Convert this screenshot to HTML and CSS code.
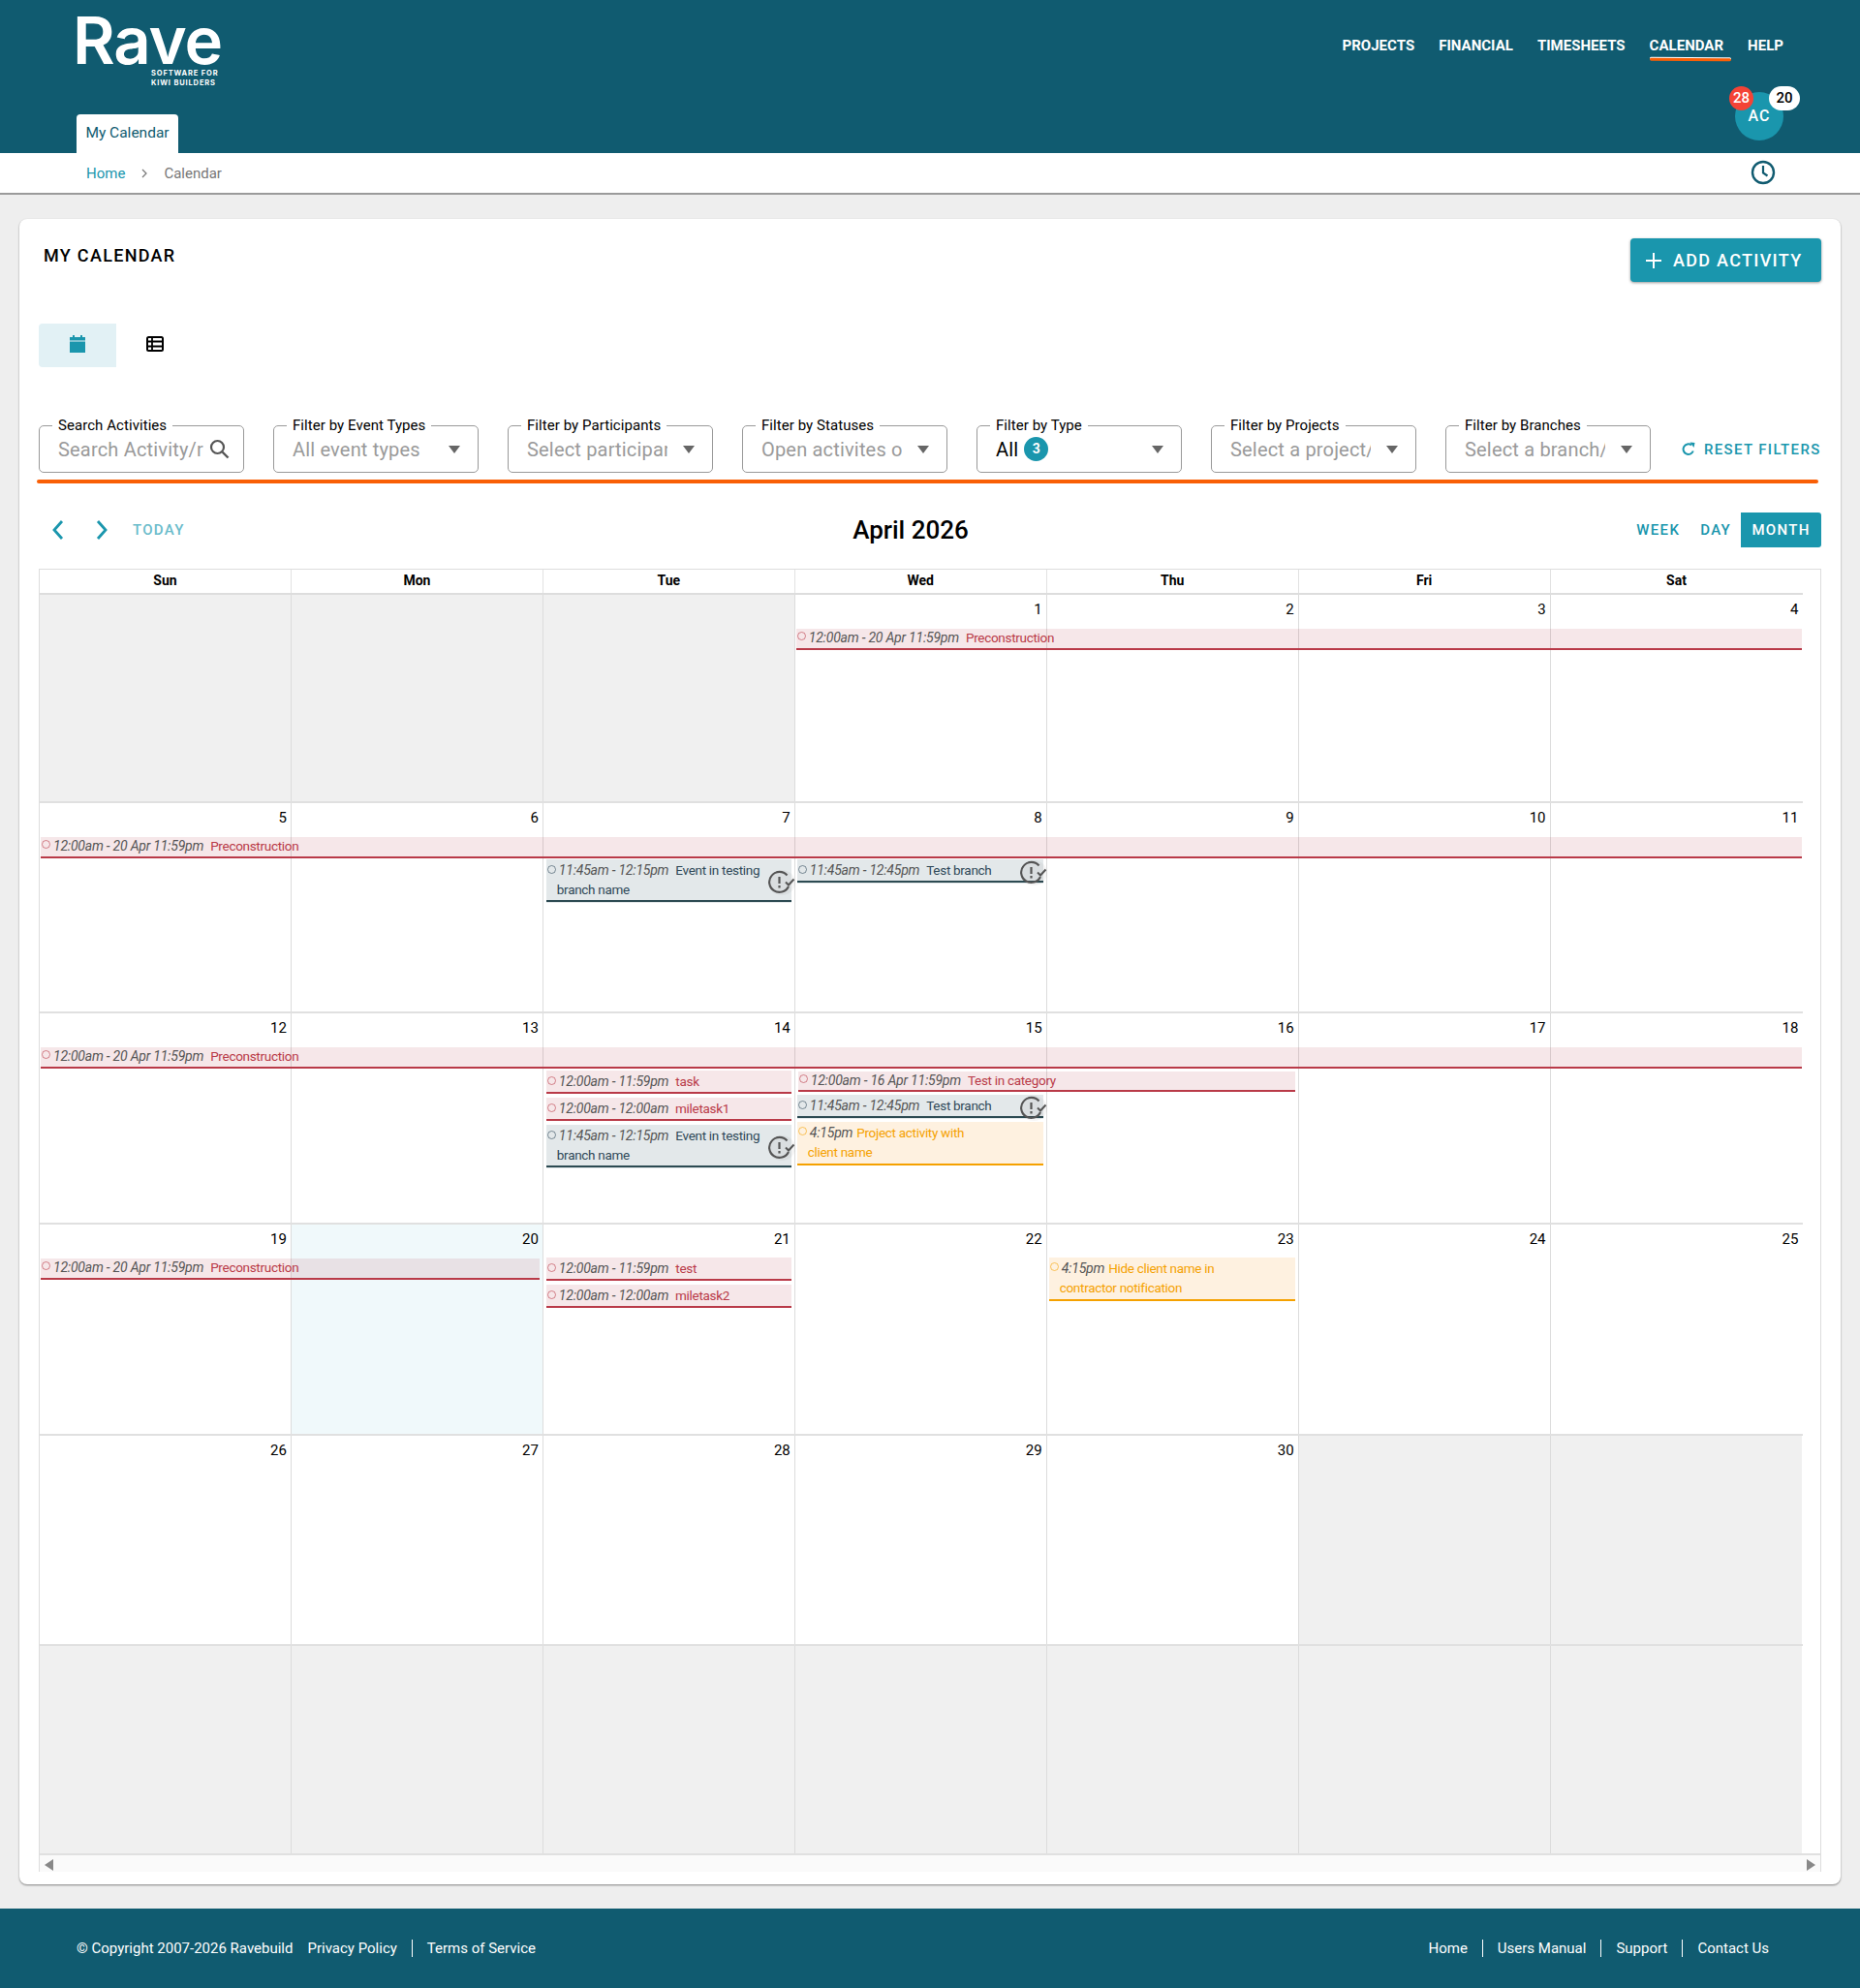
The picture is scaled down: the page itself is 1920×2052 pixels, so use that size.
FILE: index.html
```html
<!DOCTYPE html>
<html lang="en">
<head>
<meta charset="utf-8">
<title>My Calendar</title>
<link rel="stylesheet" href="styles.css">
</head>
<body>
<header class="top">
  <div class="brand">
    <div class="logo">Rave</div>
    <div class="tag">SOFTWARE FOR<br>KIWI BUILDERS</div>
  </div>
  <div class="tab">My Calendar</div>
  <nav class="nav">
    <a>PROJECTS</a><a>FINANCIAL</a><a>TIMESHEETS</a><a class="on">CALENDAR</a><a>HELP</a>
  </nav>
  <div class="avatar">AC<span class="badge b-red">28</span><span class="badge b-white">20</span></div>
</header>
<div class="crumbs">
  <a class="home">Home</a>
  <svg class="sep" width="8" height="10" viewBox="0 0 8 10"><path d="M2 1l4 4-4 4" fill="none" stroke="#777" stroke-width="1.2"/></svg>
  <span class="cur">Calendar</span>
  <svg class="clock" width="26" height="26" viewBox="0 0 26 26"><circle cx="13" cy="13" r="11" fill="none" stroke="#105b70" stroke-width="2.4"/><path d="M13 6v7.5l4.500 3" fill="none" stroke="#105b70" stroke-width="2.200"/></svg>
</div>
<main class="card">
  <div class="titlebar">
    <h1>MY CALENDAR</h1>
    <button class="add"><svg width="16" height="16" viewBox="0 0 16 16"><path d="M8 0v16M0 8h16" stroke="#fff" stroke-width="2"/></svg>ADD ACTIVITY</button>
  </div>
  <div class="toggle">
    <span class="tg active"><svg width="16" height="18" viewBox="0 0 16 18"><path d="M3 0h2v3H3zM11 0h2v3h-2z" fill="#1a96ad"/><rect x="0" y="2" width="16" height="3.500" fill="#1a96ad"/><rect x="0" y="6.500" width="16" height="11.500" fill="#1a96ad"/></svg></span>
    <span class="tg"><svg width="18" height="16" viewBox="0 0 18 16"><rect x="1" y="1" width="16" height="14" rx="1.500" fill="none" stroke="#000" stroke-width="2"/><path d="M1 5.500h16M1 10.500h16M6 1v14" stroke="#000" stroke-width="1.800"/></svg></span>
  </div>
  <div class="filters">
    <div class="field search"><span class="lbl">Search Activities</span><span class="val">Search Activity/record</span><svg class="mag" width="21" height="21" viewBox="0 0 21 21"><circle cx="8.500" cy="8.500" r="6.500" fill="none" stroke="#555" stroke-width="2.200"/><path d="M13.500 13.500l6 6" stroke="#555" stroke-width="2.400"/></svg></div>
    <div class="field"><span class="lbl">Filter by Event Types</span><span class="val">All event types</span><i class="caret"></i></div>
    <div class="field"><span class="lbl">Filter by Participants</span><span class="val">Select participants</span><i class="caret"></i></div>
    <div class="field"><span class="lbl">Filter by Statuses</span><span class="val">Open activites only</span><i class="caret"></i></div>
    <div class="field"><span class="lbl">Filter by Type</span><span class="val dark">All<b class="count">3</b></span><i class="caret"></i></div>
    <div class="field"><span class="lbl">Filter by Projects</span><span class="val">Select a project/s</span><i class="caret"></i></div>
    <div class="field"><span class="lbl">Filter by Branches</span><span class="val">Select a branch/es</span><i class="caret"></i></div>
    <a class="reset"><svg width="14" height="15" viewBox="0 0 14 15"><path d="M11.800 9.500A5.300 5.300 0 1 1 10 3.400" fill="none" stroke="#1a96ad" stroke-width="2"/><path d="M8.500 0.500l5 .5-1 5z" fill="#1a96ad"/></svg>RESET FILTERS</a>
  </div>
  <div class="rule"></div>
  <div class="toolbar">
    <div class="tb-left">
      <svg width="14" height="22" viewBox="0 0 14 22"><path d="M11 2L3 11l8 9" fill="none" stroke="#1a96ad" stroke-width="2.800"/></svg>
      <svg width="14" height="22" viewBox="0 0 14 22"><path d="M3 2l8 9-8 9" fill="none" stroke="#1a96ad" stroke-width="2.800"/></svg>
      <span class="today">TODAY</span>
    </div>
    <h2>April 2026</h2>
    <div class="views"><a>WEEK</a><a>DAY</a><a class="sel">MONTH</a></div>
  </div>
  <section class="cal">
    <div class="head"><div>Sun</div><div>Mon</div><div>Tue</div><div>Wed</div><div>Thu</div><div>Fri</div><div>Sat</div></div>
    <div class="weeks">
      <div class="week">
        <div class="days"><div class="off"></div><div class="off"></div><div class="off"></div><div>1</div><div>2</div><div>3</div><div>4</div></div>
        <div class="evs">
          <div class="ev red c4-7 span"><i></i><em>12:00am - 20 Apr 11:59pm</em><span>Preconstruction</span></div>
        </div>
      </div>
      <div class="week">
        <div class="days"><div>5</div><div>6</div><div>7</div><div>8</div><div>9</div><div>10</div><div>11</div></div>
        <div class="evs">
          <div class="ev red all span"><i></i><em>12:00am - 20 Apr 11:59pm</em><span>Preconstruction</span></div>
          <div class="stack s3 tight">
            <div class="ev grey"><i></i><em>11:45am - 12:15pm</em><span>Event in testing<br>branch name</span><svg class="warn" width="28" height="26" viewBox="0 0 28 26"><use href="#warn"/></svg></div>
          </div>
          <div class="stack s4 tight">
            <div class="ev grey"><i></i><em>11:45am - 12:45pm</em><span>Test branch</span><svg class="warn" width="28" height="26" viewBox="0 0 28 26"><use href="#warn"/></svg></div>
          </div>
        </div>
      </div>
      <div class="week">
        <div class="days"><div>12</div><div>13</div><div>14</div><div>15</div><div>16</div><div>17</div><div>18</div></div>
        <div class="evs">
          <div class="ev red all span"><i></i><em>12:00am - 20 Apr 11:59pm</em><span>Preconstruction</span></div>
          <div class="stack s3 wide">
            <div class="ev red"><i></i><em>12:00am - 11:59pm</em><span>task</span></div>
            <div class="ev red"><i></i><em>12:00am - 12:00am</em><span>miletask1</span></div>
            <div class="ev grey"><i></i><em>11:45am - 12:15pm</em><span>Event in testing<br>branch name</span><svg class="warn" width="28" height="26" viewBox="0 0 28 26"><use href="#warn"/></svg></div>
          </div>
          <div class="stack s4 wide">
            <div class="ev red cat"><i></i><em>12:00am - 16 Apr 11:59pm</em><span>Test in category</span></div>
            <div class="ev grey half"><i></i><em>11:45am - 12:45pm</em><span>Test branch</span><svg class="warn" width="28" height="26" viewBox="0 0 28 26"><use href="#warn"/></svg></div>
            <div class="ev amber half"><i></i><em>4:15pm</em><span>Project activity with<br>client name</span></div>
          </div>
        </div>
      </div>
      <div class="week">
        <div class="days"><div>19</div><div class="now">20</div><div>21</div><div>22</div><div>23</div><div>24</div><div>25</div></div>
        <div class="evs">
          <div class="ev red two span"><i></i><em>12:00am - 20 Apr 11:59pm</em><span>Preconstruction</span></div>
          <div class="stack s3 same">
            <div class="ev red"><i></i><em>12:00am - 11:59pm</em><span>test</span></div>
            <div class="ev red"><i></i><em>12:00am - 12:00am</em><span>miletask2</span></div>
          </div>
          <div class="stack s5 same">
            <div class="ev amber"><i></i><em>4:15pm</em><span>Hide client name in<br>contractor notification</span></div>
          </div>
        </div>
      </div>
      <div class="week">
        <div class="days"><div>26</div><div>27</div><div>28</div><div>29</div><div>30</div><div class="off"></div><div class="off"></div></div>
      </div>
      <div class="week">
        <div class="days"><div class="off"></div><div class="off"></div><div class="off"></div><div class="off"></div><div class="off"></div><div class="off"></div><div class="off"></div></div>
      </div>
    </div>
    <div class="hscroll"><i class="al"></i><i class="ar"></i></div>
  </section>
</main>
<footer class="foot">
  <div class="f-left"><span class="copy">© Copyright 2007-2026 Ravebuild</span><a>Privacy Policy</a><a>Terms of Service</a></div>
  <div class="f-right"><a>Home</a><a>Users Manual</a><a>Support</a><a>Contact Us</a></div>
</footer>
<svg width="0" height="0" class="defs"><defs><g id="warn"><path d="M19.500 5.500A10.500 10.500 0 1 0 21 17" fill="none" stroke="#555" stroke-width="2.200"/><path d="M11.500 7v7M11.500 16v2.500" stroke="#555" stroke-width="2.200"/><path d="M18 12.500l3 3 5.500-6" fill="none" stroke="#555" stroke-width="2"/></g></defs></svg>
</body>
</html>
```
FILE: styles.css
```css
* { box-sizing: border-box; }
html, body { margin: 0; padding: 0; }
body { background: #eeeeee; font-family: Roboto, "Liberation Sans", sans-serif; color: #000; height: 2052px; overflow: hidden; }
a { text-decoration: none; }

.top { position: relative; height: 158px; background: #105b70; padding: 0 79px; display: flex; flex-direction: column; justify-content: flex-end; }
.brand { position: absolute; left: 79px; top: 14px; width: 149px; color: #fff; }
.logo { font-family: Inter, Roboto, sans-serif; font-size: 67px; font-weight: 600; letter-spacing: -1.1px; line-height: 56px; margin-left: -4px; }
.tag { font-family: Inter, Roboto, sans-serif; font-size: 7.500px; font-weight: 700; letter-spacing: .85px; line-height: 10px; text-align: left; margin: 1px 0 0 77px; white-space: nowrap; }
.tab { width: 105px; height: 40px; background: #fff; border-radius: 4px 4px 0 0; color: #105b70; font-size: 15.500px; line-height: 39px; text-align: center; }
.nav { position: absolute; top: 38px; right: 79px; display: flex; gap: 25px; }
.nav a { color: #fff; font-weight: 700; font-size: 15px; line-height: 18px; letter-spacing: .02px; position: relative; }
.nav a.on::after { content: ""; position: absolute; left: 0; top: 22px; width: 84px; height: 3px; border-radius: 2px; background: #f95f06; box-shadow: 0 -1px 0 #fff; transform: rotate(.4deg); }
.avatar { position: absolute; left: 1791px; top: 95px; width: 50px; height: 50px; border-radius: 50%; background: #1a96ad; color: #fff; font-weight: 500; font-size: 16px; letter-spacing: 1px; line-height: 50px; text-align: center; padding-top: 0; }
.badge { position: absolute; top: -6px; height: 25px; border-radius: 13px; font-size: 15px; font-weight: 500; line-height: 25px; text-align: center; letter-spacing: 0; }
.b-red { left: -6px; width: 25px; background: #f44336; color: #fff; }
.b-white { left: 35px; width: 32px; background: #fff; color: #000; }

.crumbs { height: 43px; background: #fff; border-bottom: 2px solid #9a9a9a; display: flex; align-items: center; padding-left: 89px; font-size: 15px; position: relative; }
.home { color: #1a96ad; }
.sep { margin: 0 16px; }
.cur { color: #777; }
.clock { position: absolute; left: 1807px; top: 7px; }

.card { margin: 25px 20px 0; height: 1719px; background: #fff; border-radius: 8px; box-shadow: 0 1px 2px rgba(0,0,0,.45); padding: 20px 20px 0; }
.titlebar { display: flex; justify-content: space-between; align-items: flex-start; height: 45px; }
h1 { margin: 7px 0 0 5px; font-size: 18px; line-height: 21px; font-weight: 500; letter-spacing: 1.3px; }
.add { width: 197px; height: 45px; border: 0; border-radius: 4px; background: #1a96ad; color: #fff; font: 500 18px Roboto, sans-serif; letter-spacing: 1.3px; display: flex; align-items: center; gap: 12px; padding: 0 0 0 16px; box-shadow: 0 1px 3px rgba(0,0,0,.4); }
.toggle { display: flex; margin-top: 43px; }
.tg { width: 80px; height: 45px; display: flex; align-items: center; justify-content: center; border-radius: 4px 0 0 4px; padding-bottom: 4px; }
.tg.active { background: #e2f1f5; }
.filters { display: flex; align-items: center; margin-top: 60px; gap: 30px; }
.field { position: relative; width: 212px; height: 49px; border: 1px solid #999; border-radius: 5px; display: flex; align-items: center; padding-left: 19px; flex: none; }
.lbl { position: absolute; left: 13px; top: -10px; padding: 0 6px; background: #fff; font-size: 15px; line-height: 18px; letter-spacing: .06px; white-space: nowrap; }
.val { width: 145px; overflow: hidden; white-space: nowrap; font-size: 20px; letter-spacing: .18px; color: #9a9a9a; display: flex; align-items: center; }
.search .val { width: 150px; }
.val.dark { color: #000; }
.count { width: 25px; height: 25px; border-radius: 50%; background: #1a96ad; color: #fff; font-size: 14px; font-weight: 700; line-height: 25px; text-align: center; margin-left: 6px; flex: none; }
.caret { width: 0; height: 0; border: 6px solid transparent; border-top: 8px solid #666; border-bottom: 0; margin-left: 16px; }
.mag { margin-left: 6px; }
.reset { margin-left: 2px; display: flex; align-items: center; gap: 9px; color: #1a96ad; font-size: 15px; font-weight: 500; letter-spacing: 1.350px; white-space: nowrap; }
.rule { height: 4px; margin: 7px 3px 0 -2px; background: #f95f06; border-radius: 2px; }
.toolbar { position: relative; height: 36px; margin-top: 30px; display: flex; align-items: center; justify-content: space-between; }
.tb-left { display: flex; align-items: center; padding-left: 13px; }
.tb-left svg + svg { margin-left: 31px; }
.today { margin-left: 25px; color: #6bbccb; font-size: 15px; font-weight: 500; letter-spacing: 1.3px; }
h2 { position: absolute; left: 0; right: 40px; top: 0; margin: 0; pointer-events: none; text-align: center; font-size: 26px; font-weight: 500; line-height: 36px; }
.views { display: flex; align-items: center; height: 36px; }
.views a { color: #1a96ad; font-size: 15px; font-weight: 500; letter-spacing: 1.3px; margin-right: 21px; }
.views a:nth-child(2) { margin-right: 10px; }
.views a.sel { margin: 0; width: 83px; height: 36px; line-height: 36px; text-align: center; background: #1a96ad; color: #fff; border-radius: 0 3px 3px 0; }

.cal { margin-top: 22px; width: 1840px; border-top: 1px solid #ddd; border-left: 1px solid #ddd; border-right: 1px solid #ddd; }
.head { width: 1819.500px; height: 26px; display: grid; grid-template-columns: repeat(7, 1fr); border-bottom: 2px solid #ddd; }
.head div { text-align: center; font-size: 14px; font-weight: 700; line-height: 23px; border-right: 1px solid #e2e2e2; }
.head div:last-child { border-right: 0; }
.weeks { width: 1819.500px; display: grid; grid-template-rows: 215px 217px 218px 218px 217px 214px; }
.week { position: relative; border-bottom: 2px solid #e0e0e0; }
.week:last-child { border-bottom: 0; }
.days { position: absolute; inset: 0; display: grid; grid-template-columns: repeat(7, 1fr); }
.days div { border-right: 1px solid #dcdcdc; text-align: right; font-size: 15px; line-height: 18px; padding: 6px 4px 0 0; }
.days div:last-child { border-right: 0; }
.days .off { background: #f0f0f0; }
.days .now { background: #f0f9fb; }
.evs { position: relative; display: grid; grid-template-columns: repeat(7, 1fr); align-items: start; padding-top: 35px; }

.ev { position: relative; font-size: 13.500px; line-height: 21px; letter-spacing: -.3px; padding: 1px 4px 0 11px; border-bottom: 2px solid; white-space: nowrap; }
.ev i { position: absolute; left: 1px; top: 6px; width: 9px; height: 9px; border-radius: 50%; border: 1px solid; opacity: .6; }
.ev em { color: #555; font-size: 14px; letter-spacing: -.22px; margin: 0 7px 0 2px; }
.span, .cat { padding-top: 0; line-height: 19px; }
.span { height: 22px; }
.span i, .cat i { top: 3px; }
.all { grid-column: 1 / 8; margin-left: 1px; }
.two { grid-column: 1 / 3; margin: 0 4px 0 1px; }
.c4-7 { grid-column: 4 / 8; margin-left: 1px; }
.red { background: rgba(185, 58, 72, .12); border-color: #b93a48; color: #b93a48; }
.grey { background: #e3e8ea; border-color: #2c4a52; color: #2f4858; box-shadow: 0 1px 0 #e3e8ea; padding: 1px 4px 1px 11px; margin-bottom: 1px; line-height: 20px; }
.amber { background: #fef1e0; border-color: #f5a100; color: #f5a100; padding: 1px 4px 2px 11px; line-height: 20px; }
.amber i { top: 5px; }
.amber em { margin-right: 4px; }
.warn { position: absolute; right: -4px; top: calc(50% + 3px); transform: translateY(-50%); border-radius: 50%; background: rgba(0,0,0,.04); z-index: 1; }
.stack { grid-row: 2; display: flex; flex-direction: column; gap: 4px; padding: 0 4px 0 3px; }
.s3 { grid-column: 3; }
.s4 { grid-column: 4; padding-left: 2px; }
.s5 { grid-column: 5; padding-left: 2px; }
.s4.wide { grid-column: 4 / 6; padding: 0 4px 0 2px; gap: 3px; }
.tight { margin-top: 1px; }
.wide { margin-top: 2px; }
.same { grid-row: 1; margin-top: -1px; }
.half { width: 254px; }
.cat { margin: 1px 0 0 1px; }

.hscroll { width: 100%; height: 19px; background: #fafafa; border-top: 2px solid #e0e0e0; position: relative; }
.al, .ar { position: absolute; top: 4px; width: 0; height: 0; border-top: 6px solid transparent; border-bottom: 6px solid transparent; }
.al { left: 5px; border-right: 9px solid #888; }
.ar { right: 5px; border-left: 9px solid #888; }

.foot { margin-top: 25px; height: 82px; background: #105b70; color: #fff; display: flex; justify-content: space-between; align-items: center; padding: 0 94px 1px 79px; font-size: 15px; font-weight: 400; }
.f-left, .f-right { display: flex; align-items: center; }
.copy { margin-right: 15px; }
.foot a { color: #fff; }
.f-left a + a, .f-right a + a { border-left: 1px solid #fff; margin-left: 15px; padding-left: 15px; line-height: 18px; }
.defs { position: absolute; }
```
